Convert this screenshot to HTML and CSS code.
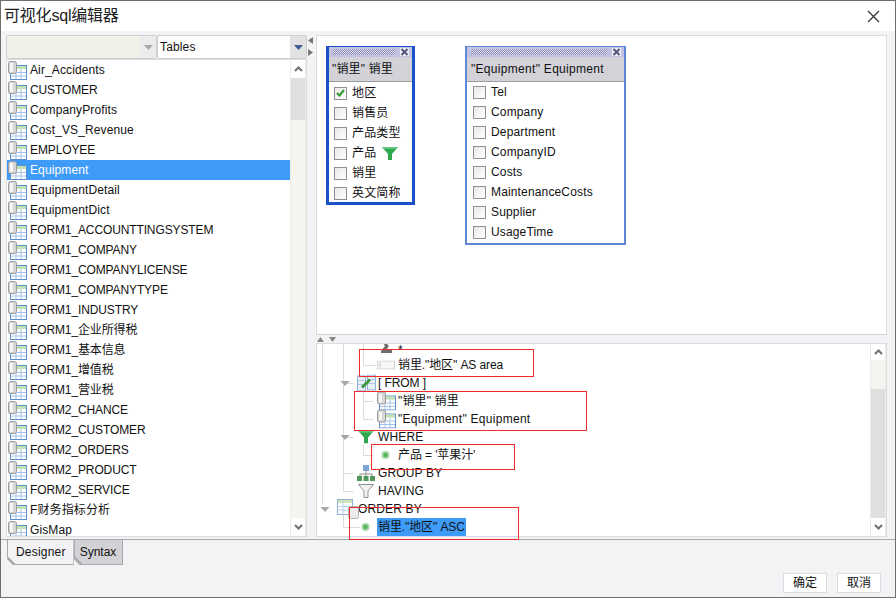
FILE: index.html
```html
<!DOCTYPE html>
<html lang="zh">
<head>
<meta charset="utf-8">
<title>可视化sql编辑器</title>
<link rel="stylesheet" href="styles.css">
</head>
<body>
<svg class="defs" width="0" height="0" aria-hidden="true">
  <defs>
    <symbol id="tbl" viewBox="0 0 19 19">
      <rect x="2.500" y="4.500" width="16" height="14" fill="#fff" stroke="#5b8fd0"/>
      <rect x="3" y="5" width="15" height="3" fill="#bfe0b0"/>
      <path d="M3 11.500h15M3 15h15M8 8v10M13 8v10" stroke="#a3c4ea" fill="none"/>
      <rect x="0.500" y="0.500" width="8" height="12" rx="2" fill="#d6d6d6" stroke="#9a9a9a"/>
      <rect x="2" y="2" width="3" height="9" fill="#f4f4f4"/>
    </symbol>
    <symbol id="funnel" viewBox="0 0 16 13">
      <path d="M0 0h16L10 7v6H6V7z" fill="#2ea84f"/>
      <path d="M0 0h16l-1.500 2H1.500z" fill="#63c77f"/>
    </symbol>
    <symbol id="funnel-gray" viewBox="0 0 16 14">
      <path d="M.5.500h15L10 7v6.500H6V7z" fill="#f2f2f2" stroke="#8f9499"/>
    </symbol>
    <symbol id="dot" viewBox="0 0 9 9">
      <circle cx="4.500" cy="4.500" r="4" fill="#a9d8a9"/>
      <circle cx="4.500" cy="4.500" r="2.200" fill="#57b35c"/>
    </symbol>
    <symbol id="chev-up" viewBox="0 0 9 6">
      <path d="M1 5l3.500-3.500L8 5" fill="none" stroke="#707070" stroke-width="2"/>
    </symbol>
    <symbol id="chev-down" viewBox="0 0 9 6">
      <path d="M1 1l3.500 3.500L8 1" fill="none" stroke="#707070" stroke-width="2"/>
    </symbol>
    <symbol id="arrow" viewBox="0 0 11 6">
      <path d="M0 0h11L5.500 6z" fill="#a8a8a8"/>
    </symbol>
    <symbol id="sum" viewBox="0 0 13 14">
      <path d="M2 1h8v2H6l3 3-3 4h6v3H1v-2l4-5z" fill="#6d6d6d"/>
    </symbol>
    <symbol id="column" viewBox="0 0 18 9">
      <rect x=".5" y=".5" width="17" height="8" fill="#f8f8f8" stroke="#cfcfcf"/>
      <rect x="2" y="2" width="2" height="5" fill="#dedede"/>
    </symbol>
    <symbol id="from" viewBox="0 0 19 17">
      <rect x=".5" y="1.500" width="8" height="15" fill="#e6eef8" stroke="#8fb0d8"/>
      <rect x="10.500" y=".5" width="8" height="15" fill="#e6eef8" stroke="#8fb0d8"/>
      <path d="M1 6h7M1 10h7M11 5h7M11 9h7" stroke="#b3c9e4"/>
      <path d="M5 13l8-8" stroke="#3c9a3c" stroke-width="3"/>
    </symbol>
    <symbol id="group" viewBox="0 0 18 16">
      <rect x="6" y="0" width="6" height="6" fill="#7ea6d8"/>
      <path d="M9 6v3M3 9h12M3 9v2M9 9v2M15 9v2" stroke="#8d8d8d" fill="none"/>
      <rect x="0" y="11" width="5" height="5" fill="#4f9a5b"/>
      <rect x="6.500" y="11" width="5" height="5" fill="#4f9a5b"/>
      <rect x="13" y="11" width="5" height="5" fill="#4f9a5b"/>
    </symbol>
    <symbol id="order" viewBox="0 0 23 20">
      <rect x=".5" y=".5" width="15" height="15" fill="#fff" stroke="#8fb0d8"/>
      <rect x="1" y="1" width="14" height="3" fill="#cfe3b9"/>
      <path d="M1 7.500h14M1 11h14M6 4v11" stroke="#bcd2ea"/>
      <rect x="11.500" y="7.500" width="10" height="12" rx="2" fill="#ececec" stroke="#b0b0b0"/>
    </symbol>
    <symbol id="win-x" viewBox="0 0 9 8">
      <rect width="9" height="8" fill="#eeeef5"/>
      <path d="M1.500 1l6 6M7.500 1l-6 6" stroke="#55557a" stroke-width="2"/>
    </symbol>
  </defs>
</svg>

<div class="window">
  <header class="titlebar">
    <h1 class="title">可视化sql编辑器</h1>
    <svg class="close" width="13" height="13" viewBox="0 0 13 13"><path d="M1 1l11 11M12 1L1 12" stroke="#333" stroke-width="1.200"/></svg>
  </header>

  <main class="main">
    <aside class="left">
      <div class="combos">
        <div class="combo combo-off"><span class="combo-value"></span><span class="combo-btn"><svg width="9" height="5"><use href="#arrow"/></svg></span></div>
        <div class="combo combo-on"><span class="combo-value">Tables</span><span class="combo-btn"><svg width="9" height="5"><path d="M0 0h9L4.500 5z" fill="#3f5f8f"/></svg></span></div>
      </div>
      <div class="listbox">
        <ul class="list">
          <li class="item"><svg class="ti"><use href="#tbl"/></svg>Air_Accidents</li>
          <li class="item caps"><svg class="ti"><use href="#tbl"/></svg>CUSTOMER</li>
          <li class="item"><svg class="ti"><use href="#tbl"/></svg>CompanyProfits</li>
          <li class="item"><svg class="ti"><use href="#tbl"/></svg>Cost_VS_Revenue</li>
          <li class="item caps"><svg class="ti"><use href="#tbl"/></svg>EMPLOYEE</li>
          <li class="item selected"><svg class="ti"><use href="#tbl"/></svg>Equipment</li>
          <li class="item"><svg class="ti"><use href="#tbl"/></svg>EquipmentDetail</li>
          <li class="item"><svg class="ti"><use href="#tbl"/></svg>EquipmentDict</li>
          <li class="item caps"><svg class="ti"><use href="#tbl"/></svg>FORM1_ACCOUNTTINGSYSTEM</li>
          <li class="item caps"><svg class="ti"><use href="#tbl"/></svg>FORM1_COMPANY</li>
          <li class="item caps"><svg class="ti"><use href="#tbl"/></svg>FORM1_COMPANYLICENSE</li>
          <li class="item caps"><svg class="ti"><use href="#tbl"/></svg>FORM1_COMPANYTYPE</li>
          <li class="item caps"><svg class="ti"><use href="#tbl"/></svg>FORM1_INDUSTRY</li>
          <li class="item caps"><svg class="ti"><use href="#tbl"/></svg>FORM1_企业所得税</li>
          <li class="item caps"><svg class="ti"><use href="#tbl"/></svg>FORM1_基本信息</li>
          <li class="item caps"><svg class="ti"><use href="#tbl"/></svg>FORM1_增值税</li>
          <li class="item caps"><svg class="ti"><use href="#tbl"/></svg>FORM1_营业税</li>
          <li class="item caps"><svg class="ti"><use href="#tbl"/></svg>FORM2_CHANCE</li>
          <li class="item caps"><svg class="ti"><use href="#tbl"/></svg>FORM2_CUSTOMER</li>
          <li class="item caps"><svg class="ti"><use href="#tbl"/></svg>FORM2_ORDERS</li>
          <li class="item caps"><svg class="ti"><use href="#tbl"/></svg>FORM2_PRODUCT</li>
          <li class="item caps"><svg class="ti"><use href="#tbl"/></svg>FORM2_SERVICE</li>
          <li class="item"><svg class="ti"><use href="#tbl"/></svg>F财务指标分析</li>
          <li class="item"><svg class="ti"><use href="#tbl"/></svg>GisMap</li>
        </ul>
        <div class="scrollbar sb-list">
          <span class="sb-btn"><svg width="9" height="6"><use href="#chev-up"/></svg></span>
          <span class="sb-thumb"></span>
          <span class="sb-track"></span>
          <span class="sb-btn"><svg width="9" height="6"><use href="#chev-down"/></svg></span>
        </div>
      </div>
    </aside>

    <div class="vsplit">
      <svg width="5" height="7"><path d="M5 0v7L0 3.500z" fill="#777"/></svg>
      <svg width="5" height="7"><path d="M0 0v7l5-3.500z" fill="#777"/></svg>
    </div>

    <section class="right">
      <div class="canvas">
        <div class="table-win active t1">
          <div class="grip"><span class="dots"></span><svg width="9" height="8"><use href="#win-x"/></svg></div>
          <div class="table-head">"销里" 销里</div>
          <ul class="fields">
            <li class="field"><span class="cb checked"><svg width="9" height="8" viewBox="0 0 9 8"><path d="M1 4l2.500 2.500L8 1" fill="none" stroke="#2a9a2a" stroke-width="2"/></svg></span>地区</li>
            <li class="field"><span class="cb"></span>销售员</li>
            <li class="field"><span class="cb"></span>产品类型</li>
            <li class="field"><span class="cb"></span>产品<svg class="ff" width="16" height="13"><use href="#funnel"/></svg></li>
            <li class="field"><span class="cb"></span>销里</li>
            <li class="field"><span class="cb"></span>英文简称</li>
          </ul>
        </div>
        <div class="table-win t2">
          <div class="grip"><span class="dots"></span><svg width="9" height="8"><use href="#win-x"/></svg></div>
          <div class="table-head">"Equipment" Equipment</div>
          <ul class="fields">
            <li class="field"><span class="cb"></span>Tel</li>
            <li class="field"><span class="cb"></span>Company</li>
            <li class="field"><span class="cb"></span>Department</li>
            <li class="field"><span class="cb"></span>CompanyID</li>
            <li class="field"><span class="cb"></span>Costs</li>
            <li class="field"><span class="cb"></span>MaintenanceCosts</li>
            <li class="field"><span class="cb"></span>Supplier</li>
            <li class="field"><span class="cb"></span>UsageTime</li>
          </ul>
        </div>
      </div>

      <div class="hsplit">
        <svg width="7" height="5"><path d="M0 5h7L3.500 0z" fill="#888"/></svg>
        <svg width="7" height="5"><path d="M0 0h7L3.500 5z" fill="#888"/></svg>
      </div>

      <div class="treebox">
        <div class="tree-view">
          <svg class="tree-lines" width="60" height="192" viewBox="0 0 60 192">
            <path d="M5.500 0v161M26.500 0v147.500h10M26.500 129.500h10M26.500 93.500h10M26.500 39.500h10M46.500 0v21.500h12M46.500 46v29.500h10M46.500 57.500h10M46.500 100v11.500h10M26.500 170v13.500h16" fill="none" stroke="#dcdcdc"/>
          </svg>
          <ul class="tree">
            <li class="node lv2 star"><svg class="ni ni-sum" width="13" height="14"><use href="#sum"/></svg>*</li>
            <li class="node lv2 tight"><svg class="ni" width="18" height="9"><use href="#column"/></svg>销里."地区" AS area</li>
            <li class="node lv1 tight"><svg class="twist" width="10" height="5"><use href="#arrow"/></svg><svg class="ni" width="19" height="17"><use href="#from"/></svg>[ FROM ]</li>
            <li class="node lv2"><svg class="ni" width="19" height="19"><use href="#tbl"/></svg>"销里" 销里</li>
            <li class="node lv2 wide"><svg class="ni" width="19" height="19"><use href="#tbl"/></svg>"Equipment" Equipment</li>
            <li class="node lv1"><svg class="twist" width="10" height="5"><use href="#arrow"/></svg><svg class="ni ni-funnel" width="16" height="13"><use href="#funnel"/></svg>WHERE</li>
            <li class="node lv2 tight"><svg class="ni ni-dot" width="9" height="9"><use href="#dot"/></svg>产品 = '苹果汁'</li>
            <li class="node lv1"><svg class="ni" width="18" height="16"><use href="#group"/></svg>GROUP BY</li>
            <li class="node lv1"><svg class="ni ni-funnel" width="16" height="14"><use href="#funnel-gray"/></svg>HAVING</li>
            <li class="node lv0"><svg class="twist" width="10" height="5"><use href="#arrow"/></svg><svg class="ni" width="23" height="20"><use href="#order"/></svg>ORDER BY</li>
            <li class="node lv1 tight"><svg class="ni ni-dot" width="9" height="9"><use href="#dot"/></svg><span class="hl">销里."地区" ASC</span></li>
          </ul>
        </div>
        <div class="scrollbar sb-tree">
          <span class="sb-btn sb-first"><svg width="9" height="6"><use href="#chev-up"/></svg></span>
          <span class="sb-track"></span>
          <span class="sb-thumb"></span>
          <span class="sb-btn"><svg width="9" height="6"><use href="#chev-down"/></svg></span>
        </div>
        <span class="mark m1"></span>
        <span class="mark m2"></span>
        <span class="mark m3"></span>
        <span class="mark m4"></span>
      </div>
    </section>
  </main>

  <nav class="tabs">
    <span class="tab on">Designer</span>
    <span class="tab">Syntax</span>
  </nav>

  <footer class="footer">
    <button class="btn" type="button">确定</button>
    <button class="btn" type="button">取消</button>
  </footer>
</div>
</body>
</html>
```
FILE: styles.css
```css
* { box-sizing: border-box; }
html, body { margin: 0; padding: 0; }
body {
  width: 896px;
  height: 598px;
  overflow: hidden;
  font: 12px/18px "Liberation Sans", "Noto Sans CJK SC", sans-serif;
  color: #111;
  background: #f3f3f6;
}
ul { list-style: none; margin: 0; padding: 0; }
.defs { position: absolute; }
svg { display: block; flex: none; }

.window {
  width: 896px;
  height: 598px;
  display: flex;
  flex-direction: column;
  border: 1px solid #6e6e6e;
  background: #f3f3f6;
}

.titlebar {
  height: 30px;
  flex: none;
  background: #fff;
  display: flex;
  align-items: center;
  justify-content: space-between;
  padding: 0 15px 0 3px;
}
.title {
  margin: 0;
  font-size: 16px;
  font-weight: 400;
  letter-spacing: -.2px;
  color: #222;
}

.main {
  height: 509px;
  flex: none;
  display: flex;
  padding: 4px 0 0 5px;
  border-bottom: 1px solid #a9a9a9;
}

.left { width: 301px; flex: none; display: flex; flex-direction: column; }
.combos { height: 24px; flex: none; display: flex; }
.combo {
  display: flex;
  border: 1px solid #cfcfcf;
  border-radius: 2px;
  height: 24px;
}
.combo-off { width: 151px; background: #f2f1e8; }
.combo-on { width: 150px; background: #fff; }
.combo-value { flex: 1; padding-left: 2px; line-height: 23px; letter-spacing: .15px; }
.combo-btn {
  width: 16px;
  display: flex;
  align-items: center;
  justify-content: center;
  background: #e2e2e4;
}
.combo-off .combo-btn { background: #ececec; }

.listbox {
  height: 478px;
  flex: none;
  display: flex;
  background: #fff;
  border: 1px solid #dcdce0;
  overflow: hidden;
}
.list { flex: 1; overflow: hidden; }
.item {
  height: 20px;
  display: flex;
  align-items: center;
  gap: 3px;
  padding-left: 1px;
  line-height: 20px;
  letter-spacing: .12px;
  white-space: nowrap;
}
.item.caps { letter-spacing: -.12px; }
.item.selected { background: #3f9bf8; color: #fff; }
.ti { width: 19px; height: 19px; }

.scrollbar {
  width: 16px;
  flex: none;
  display: flex;
  flex-direction: column;
  background: #f6f4f0;
  border-left: 1px solid #efebe2;
  border-right: 1px solid #efebe2;
}
.sb-btn {
  height: 18px;
  flex: none;
  display: flex;
  align-items: center;
  justify-content: center;
  background: #fff;
}
.sb-first { height: 16px; }
.sb-thumb { background: #dfdfdf; }
.sb-track { flex: 1; }
.sb-list .sb-thumb { height: 42px; flex: none; }
.sb-tree .sb-thumb { flex: 1; }
.sb-tree .sb-track { flex: none; height: 29px; }

.vsplit {
  width: 9px;
  flex: none;
  display: flex;
  flex-direction: column;
  align-items: center;
  gap: 5px;
  padding-top: 2px;
  padding-right: 2px;
}

.right { width: 571px; flex: none; display: flex; flex-direction: column; }
.canvas {
  position: relative;
  height: 300px;
  flex: none;
  background: #fff;
  border: 1px solid #dcdce0;
  border-bottom-color: #cfcfd4;
}
.hsplit {
  height: 8px;
  flex: none;
  display: flex;
  align-items: center;
  gap: 5px;
  padding-left: 1px;
}
.treebox {
  position: relative;
  height: 194px;
  flex: none;
  display: flex;
  border: 1px solid #dcdce0;
  background: #fff;
}
.tree-view { position: relative; flex: 1; overflow: hidden; }
.tree-lines { position: absolute; left: 0; top: 0; }
.tree { position: relative; margin-top: -6px; }
.node {
  position: relative;
  height: 18px;
  display: flex;
  align-items: center;
  white-space: nowrap;
  letter-spacing: .15px;
}
.node.star { padding-top: 5px; }
.node.tight { letter-spacing: -.1px; }
.node.wide { letter-spacing: .28px; }
.node .ni { position: absolute; top: 50%; transform: translateY(-50%); margin-left: -21px; }
.node .ni-sum { margin-left: -18px; }
.node .ni-dot { margin-left: -17px; }
.node .ni-funnel { margin-left: -20px; }
.node .twist { position: absolute; top: 7px; margin-left: -38px; }
.lv0 { padding-left: 41px; }
.lv1 { padding-left: 61px; }
.lv2 { padding-left: 81px; }
.hl { background: #3f9bf8; padding: 0 1px; margin-left: -1px; }

.mark {
  position: absolute;
  border: 1px solid #f02b2b;
  pointer-events: none;
}
.m1 { left: 42px; top: 5px; width: 175px; height: 28px; }
.m2 { left: 37px; top: 47px; width: 233px; height: 40px; }
.m3 { left: 54px; top: 100px; width: 144px; height: 26px; }
.m4 { left: 32px; top: 163px; width: 170px; height: 33px; }

.table-win {
  position: absolute;
  top: 10px;
  background: #fff;
  border: 2px solid #5f87d6;
  border-top: 1px solid #5f87d6;
}
.table-win.active { border: 3px solid #1a50c8; border-top-width: 1px; }
.t1 { left: 9px; width: 89px; height: 159px; }
.t2 { left: 148px; width: 161px; height: 199px; }
.grip {
  height: 10px;
  background: #c2c2e2;
  display: flex;
  align-items: center;
  gap: 5px;
  padding: 0 3px 0 4px;
}
.dots {
  flex: 1;
  height: 6px;
  background-image: repeating-conic-gradient(#8c8cb4 0 25%, #dcdcee 0 50%);
  background-size: 2px 2px;
}
.table-head {
  height: 25px;
  line-height: 25px;
  padding-left: 3px;
  background: #d2d2d8;
  border-bottom: 1px solid #9c9c9c;
  letter-spacing: .15px;
  white-space: nowrap;
}
.t2 .table-head { padding-left: 4px; letter-spacing: .3px; line-height: 24px; }
.fields { padding-top: 1px; }
.t2 .fields { padding-top: 0; }
.field {
  height: 20px;
  display: flex;
  align-items: center;
  gap: 5px;
  padding-left: 5px;
  letter-spacing: .15px;
  white-space: nowrap;
}
.cb {
  width: 13px;
  height: 13px;
  flex: none;
  display: flex;
  align-items: center;
  justify-content: center;
  background: linear-gradient(135deg, #e8e8e8, #fff);
  border: 1px solid #8f8f8f;
}
.t2 .field { padding-left: 6px; }
.ff { margin-left: 1px; }

.tabs {
  height: 25px;
  flex: none;
  display: flex;
  align-items: flex-start;
  padding: 0 0 0 6px;
}
.tab {
  height: 25px;
  padding: 3px 6px 0 5px;
  background: linear-gradient(45deg, #a9a9a9 5px, #d2d2d6 5px);
  border: 1px solid #a9a9a9;
  border-top: 0;
  line-height: 18px;
  clip-path: polygon(0 0, 100% 0, 100% 100%, 6px 100%, 0 19px);
}
.tab.on {
  padding: 3px 7px 0 8px;
  letter-spacing: .2px;
  background: linear-gradient(45deg, #a9a9a9 5px, #f3f3f6 5px);
}

.footer {
  flex: 1;
  display: flex;
  justify-content: flex-end;
  gap: 10px;
  padding: 8px 14px 0 0;
}
.btn {
  width: 44px;
  height: 20px;
  padding: 0;
  font: inherit;
  line-height: 18px;
  color: #111;
  background: #fff;
  border: 1px solid #dcdce0;
}
```
